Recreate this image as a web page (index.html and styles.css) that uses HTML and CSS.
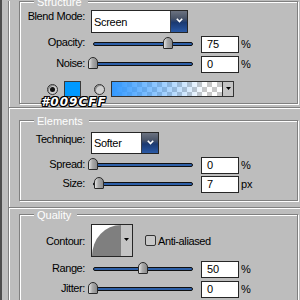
FILE: index.html
```html
<!DOCTYPE html>
<html>
<head>
<meta charset="utf-8">
<link rel="stylesheet" href="styles.css">
</head>
<body>
<div class="dialog">
  <div class="outer">
    <section class="group g-structure">
      <h3 class="legend">Structure</h3>
      <div class="row r-blend">
        <span class="label">Blend Mode:</span>
        <div class="select sel-blend">
          <span class="sel-text">Screen</span>
          <span class="sel-btn"><svg width="7" height="5" viewBox="0 0 7 5"><polyline points="0.8,0.8 3.5,3.6 6.2,0.8" fill="none" stroke="#fff" stroke-width="1.6"/></svg></span>
        </div>
      </div>
      <div class="row r-opacity">
        <span class="label">Opacity:</span>
        <div class="slider"><div class="track"></div><div class="thumb" style="--v:75"></div></div>
        <div class="num">75</div><span class="unit">%</span>
      </div>
      <div class="row r-noise">
        <span class="label">Noise:</span>
        <div class="slider"><div class="track"></div><div class="thumb" style="--v:0"></div></div>
        <div class="num">0</div><span class="unit">%</span>
      </div>
      <div class="row r-color">
        <span class="radio on"></span>
        <span class="swatch"></span>
        <span class="radio r2"></span>
        <div class="gradpick">
          <span class="grad"></span>
          <span class="gbtn"><svg width="5" height="3" viewBox="0 0 5 3"><polygon points="0,0 5,0 2.5,3" fill="#000"/></svg></span>
        </div>
      </div>
      <span class="note">#009CFF</span>
    </section>

    <div class="sep"></div>

    <section class="group g-elements">
      <h3 class="legend">Elements</h3>
      <div class="row r-tech">
        <span class="label">Technique:</span>
        <div class="select sel-tech">
          <span class="sel-text">Softer</span>
          <span class="sel-btn"><svg width="7" height="5" viewBox="0 0 7 5"><polyline points="0.8,0.8 3.5,3.6 6.2,0.8" fill="none" stroke="#fff" stroke-width="1.6"/></svg></span>
        </div>
      </div>
      <div class="row r-spread">
        <span class="label">Spread:</span>
        <div class="slider"><div class="track"></div><div class="thumb" style="--v:0"></div></div>
        <div class="num">0</div><span class="unit">%</span>
      </div>
      <div class="row r-size">
        <span class="label">Size:</span>
        <div class="slider"><div class="track"></div><div class="thumb" style="--v:6"></div></div>
        <div class="num">7</div><span class="unit">px</span>
      </div>
    </section>

    <div class="sep sep-2"></div>

    <section class="group g-quality">
      <h3 class="legend">Quality</h3>
      <div class="row r-contour">
        <span class="label">Contour:</span>
        <div class="contour">
          <svg width="29" height="31" viewBox="0 0 29 31"><path d="M0,31 A29,31 0 0 1 29,0 L29,31 Z" fill="#7f7f7f"/></svg>
          <span class="cbtn"><svg width="5" height="3" viewBox="0 0 5 3"><polygon points="0,0 5,0 2.5,3" fill="#000"/></svg></span>
        </div>
        <span class="check"></span>
        <span class="check-label">Anti-aliased</span>
      </div>
      <div class="row r-range">
        <span class="label">Range:</span>
        <div class="slider"><div class="track"></div><div class="thumb" style="--v:50"></div></div>
        <div class="num">50</div><span class="unit">%</span>
      </div>
      <div class="row r-jitter">
        <span class="label">Jitter:</span>
        <div class="slider"><div class="track"></div><div class="thumb" style="--v:0"></div></div>
        <div class="num">0</div><span class="unit">%</span>
      </div>
    </section>
  </div>
</div>
</body>
</html>
```
FILE: styles.css
```css
* { box-sizing: border-box; }
html, body { margin: 0; padding: 0; }
body {
  background: #bdbdbd;
  font-family: "Liberation Sans", Arial, sans-serif;
  font-size: 11px;
  color: #000;
}
.dialog {
  width: 300px;
  height: 300px;
  overflow: hidden;
  background: #bdbdbd;
  border-left: 2px solid #4d4d4d;
  padding-left: 6px;
}
.outer {
  width: 300px;
  min-height: 300px;
  border-left: 1px solid #808080;
  box-shadow: inset 1px 0 0 #fff;
  padding-left: 10px;
}
.group {
  position: relative;
  width: 279px;
  border: 1px solid #808080;
  box-shadow: inset 1px 1px 0 #fff, 1px 1px 0 #fff;
}
.legend {
  position: absolute;
  top: -6px;
  left: 14px;
  margin: 0;
  padding: 0 6px 0 3px;
  background: #bdbdbd;
  color: #fff;
  font-size: 11px;
  font-weight: normal;
  line-height: 12px;
  letter-spacing: 0;
}
.g-structure { margin-top: 1px; padding-bottom: 6px; }
.g-elements { margin-top: 11px; padding-bottom: 7px; }
.g-quality { margin-top: 5px; padding-bottom: 20px; }

.sep {
  width: 300px;
  margin-left: -10px;
  margin-top: 3px;
  border-top: 1px solid #808080;
  border-bottom: 1px solid #fff;
}
.sep-2 { margin-top: 6px; }

.row { display: flex; align-items: flex-start; }
.label {
  width: 65px;
  flex: none;
  text-align: right;
  line-height: 12px;
  padding-top: 1px;
  letter-spacing: -0.4px;
  white-space: nowrap;
}
.r-blend { height: 23px; margin-top: 8px; }
.r-blend .label, .r-opacity .label { padding-top: 0; }
.r-opacity { height: 17px; margin-top: 3px; }
.r-noise { height: 17px; margin-top: 3px; }
.r-color { height: 16px; margin-top: 8px; padding-left: 27px; align-items: center; }
.r-tech { height: 22px; margin-top: 11px; }
.r-spread { height: 17px; margin-top: 3px; }
.r-size { height: 17px; margin-top: 2px; }
.r-contour { height: 33px; margin-top: 9px; align-items: center; }
.r-contour .label { padding-top: 0; }
.r-range { height: 17px; margin-top: 4px; }
.r-jitter { height: 17px; margin-top: 3px; }

.select {
  display: flex;
  height: 100%;
  margin-left: 6px;
  border: 1px solid #262626;
  background: #fff;
  flex: none;
}
.sel-blend { width: 97px; }
.sel-tech { width: 68px; }
.sel-text {
  flex: 1;
  padding-left: 2px;
  align-self: center;
  line-height: 12px;
  letter-spacing: -0.3px;
}
.sel-btn {
  width: 17px;
  flex: none;
  display: flex;
  justify-content: center;
  align-items: flex-start;
  padding-top: 7px;
  border-left: 1px solid #3a3f48;
  background: linear-gradient(#6b7280 0%, #495468 35%, #1b3a72 55%, #224a8e 80%, #2b5aa6 100%);
}
.sel-btn svg { display: block; }

.slider {
  position: relative;
  width: 108px;
  height: 17px;
  margin-left: 4px;
  flex: none;
}
.track {
  margin: 6px 4px 0;
  height: 4px;
  border: 1px solid #101010;
  border-radius: 2px;
  background: #2d5fa8;
}
.thumb {
  position: absolute;
  top: 1px;
  left: calc(var(--v) * 1px - 1px);
  width: 10px;
  height: 12px;
  border: 1px solid #2a2a2a;
  border-radius: 5px 5px 1px 1px;
  background: linear-gradient(to right, #e2e2e2, #a8a8a8 45%, #8c8c8c);
}
.num {
  width: 38px;
  height: 17px;
  margin-left: 4px;
  flex: none;
  border: 1px solid #262626;
  background: #fff;
  padding-left: 5px;
  line-height: 15px;
}
.unit { margin-left: 2px; line-height: 12px; padding-top: 2px; }

.radio {
  width: 11px;
  height: 11px;
  flex: none;
  border-radius: 50%;
  border: 1px solid #333;
  background: #cfcfcf;
  box-shadow: inset 1px 1px 0 #8a8a8a;
  display: flex;
  align-items: center;
  justify-content: center;
}
.radio.on::after {
  content: "";
  width: 5px;
  height: 5px;
  border-radius: 50%;
  background: #111;
}
.swatch {
  width: 17px;
  height: 16px;
  flex: none;
  margin-left: 6px;
  background: #0099ff;
  border: 1px solid #3a3a3a;
}
.radio.r2 { margin-left: 13px; }
.gradpick {
  display: flex;
  width: 123px;
  height: 16px;
  flex: none;
  margin-left: 6px;
  border: 1px solid #333;
}
.grad {
  flex: 1;
  background:
    linear-gradient(to right, #3399ff 0%, rgba(51,153,255,0.55) 40%, rgba(51,153,255,0) 85%),
    repeating-conic-gradient(#c8c8c8 0 25%, #fff 0 50%) 0 0 / 10px 10px;
}
.gbtn {
  width: 11px;
  flex: none;
  border-left: 1px solid #333;
  background: #c4c4c4;
  display: flex;
  justify-content: center;
  padding-top: 5px;
}
.gbtn svg, .cbtn svg { display: block; }

.note {
  position: absolute;
  left: 21px;
  top: 94px;
  font-family: "DejaVu Sans", sans-serif;
  font-style: italic;
  font-weight: bold;
  font-size: 12px;
  line-height: 12px;
  letter-spacing: 1px;
  color: #fff;
  text-shadow: 1px 0 #000, -1px 0 #000, 0 1px #000, 0 -1px #000,
               1px 1px #000, -1px -1px #000, 1px -1px #000, -1px 1px #000;
}

.contour {
  display: flex;
  width: 42px;
  height: 33px;
  flex: none;
  margin-left: 6px;
  border: 1px solid #262626;
}
.contour > svg { display: block; background: #fff; flex: none; }
.cbtn {
  flex: 1;
  background: #c4c4c4;
  display: flex;
  justify-content: center;
  padding-top: 13px;
}
.check {
  width: 11px;
  height: 11px;
  flex: none;
  margin-left: 12px;
  border: 1px solid #333;
  border-radius: 2px;
  background: #c8c8c8;
}
.check-label { margin-left: 2px; letter-spacing: -0.4px; line-height: 12px; }
```
